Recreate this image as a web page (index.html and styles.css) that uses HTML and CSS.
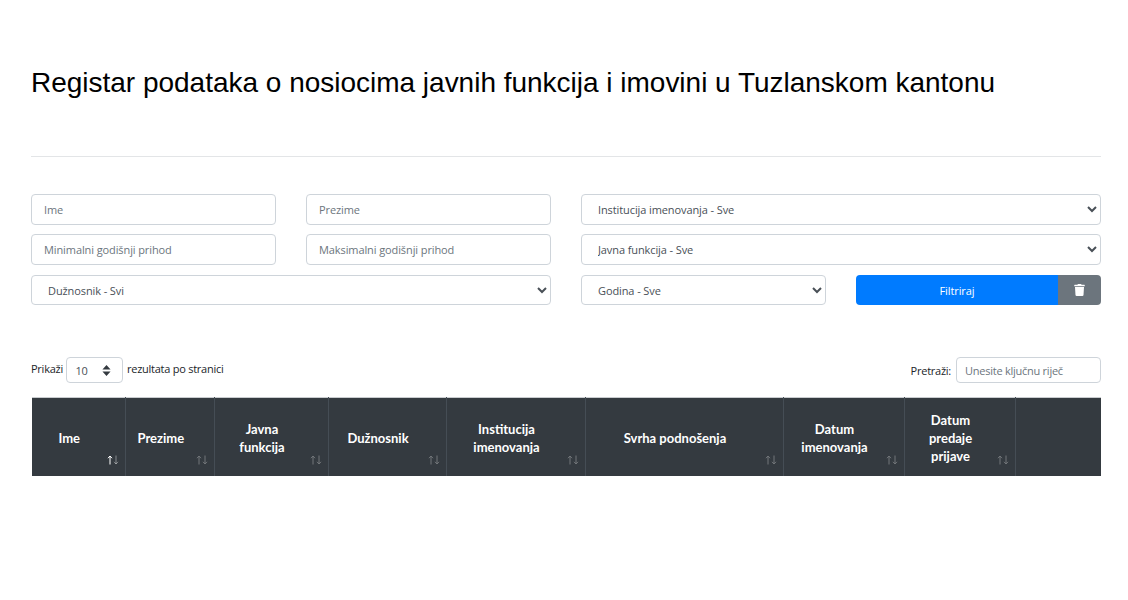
FILE: index.html
```html
<!DOCTYPE html>
<html lang="bs">
<head>
<meta charset="utf-8">
<title>Registar</title>
<link rel="stylesheet" href="styles.css">
</head>
<body>
<main class="page">
  <h1 class="title">Registar podataka o nosiocima javnih funkcija i imovini u Tuzlanskom kantonu</h1>
  <hr class="rule">
  <form class="filters">
    <input class="field" placeholder="Ime">
    <input class="field" placeholder="Prezime">
    <select class="field select span-2"><option>Institucija imenovanja - Sve</option></select>
    <input class="field" placeholder="Minimalni godišnji prihod">
    <input class="field" placeholder="Maksimalni godišnji prihod">
    <select class="field select span-2"><option>Javna funkcija - Sve</option></select>
    <select class="field select span-2 last-row"><option>Dužnosnik - Svi</option></select>
    <select class="field select last-row"><option>Godina - Sve</option></select>
    <div class="actions last-row">
      <button type="button" class="btn btn-primary">Filtriraj</button>
      <button type="button" class="btn btn-secondary" aria-label="Obriši">
        <svg class="trash" viewBox="0 0 448 512" aria-hidden="true"><path fill="currentColor" d="M432 32H312l-9.400-18.700A24 24 0 0 0 281.100 0H166.800a23.700 23.700 0 0 0-21.400 13.300L136 32H16A16 16 0 0 0 0 48v32a16 16 0 0 0 16 16h416a16 16 0 0 0 16-16V48a16 16 0 0 0-16-16zM53.200 467a48 48 0 0 0 47.900 45h245.800a48 48 0 0 0 47.900-45L416 128H32z"/></svg>
      </button>
    </div>
  </form>
  <div class="controls">
    <label class="length"><span class="length-text">Prikaži</span>
      <span class="length-wrap">
        <select class="length-select"><option>10</option></select>
        <svg class="updown" viewBox="0 0 10 12" aria-hidden="true"><path d="M5 0 9.500 4.800H.5zM5 12 .5 7.200h9z"/></svg>
      </span>
      <span class="length-text">rezultata po stranici</span></label>
    <label class="search">Pretraži:
      <input class="search-input" placeholder="Unesite ključnu riječ">
    </label>
  </div>
  <table class="table">
    <colgroup>
      <col class="c1"><col class="c2"><col class="c3"><col class="c4"><col class="c5"><col class="c6"><col class="c7"><col class="c8"><col class="c9">
    </colgroup>
    <thead>
      <tr>
        <th><span class="th-text">Ime</span><svg class="sort active" viewBox="0 0 12 10" aria-hidden="true"><path class="up" d="M3 9.500V1M1 3.200 3 1l2 2.200"/><path class="down" d="M9 .5V9M7 6.800 9 9l2-2.200"/></svg></th>
        <th><span class="th-text">Prezime</span><svg class="sort" viewBox="0 0 12 10" aria-hidden="true"><path class="up" d="M3 9.500V1M1 3.200 3 1l2 2.200"/><path class="down" d="M9 .5V9M7 6.800 9 9l2-2.200"/></svg></th>
        <th><span class="th-text">Javna<br>funkcija</span><svg class="sort" viewBox="0 0 12 10" aria-hidden="true"><path class="up" d="M3 9.500V1M1 3.200 3 1l2 2.200"/><path class="down" d="M9 .5V9M7 6.800 9 9l2-2.200"/></svg></th>
        <th><span class="th-text">Dužnosnik</span><svg class="sort" viewBox="0 0 12 10" aria-hidden="true"><path class="up" d="M3 9.500V1M1 3.200 3 1l2 2.200"/><path class="down" d="M9 .5V9M7 6.800 9 9l2-2.200"/></svg></th>
        <th><span class="th-text">Institucija<br>imenovanja</span><svg class="sort" viewBox="0 0 12 10" aria-hidden="true"><path class="up" d="M3 9.500V1M1 3.200 3 1l2 2.200"/><path class="down" d="M9 .5V9M7 6.800 9 9l2-2.200"/></svg></th>
        <th><span class="th-text">Svrha podnošenja</span><svg class="sort" viewBox="0 0 12 10" aria-hidden="true"><path class="up" d="M3 9.500V1M1 3.200 3 1l2 2.200"/><path class="down" d="M9 .5V9M7 6.800 9 9l2-2.200"/></svg></th>
        <th><span class="th-text">Datum<br>imenovanja</span><svg class="sort" viewBox="0 0 12 10" aria-hidden="true"><path class="up" d="M3 9.500V1M1 3.200 3 1l2 2.200"/><path class="down" d="M9 .5V9M7 6.800 9 9l2-2.200"/></svg></th>
        <th><span class="th-text">Datum<br>predaje<br>prijave</span><svg class="sort" viewBox="0 0 12 10" aria-hidden="true"><path class="up" d="M3 9.500V1M1 3.200 3 1l2 2.200"/><path class="down" d="M9 .5V9M7 6.800 9 9l2-2.200"/></svg></th>
        <th></th>
      </tr>
    </thead>
  </table>
</main>
</body>
</html>
```
FILE: styles.css
```css
* { box-sizing: border-box; }
html, body { margin: 0; background: #fff; }
body {
  font-family: "Open Sans", "Noto Sans", sans-serif;
  font-size: 11px;
  letter-spacing: -.1px;
  color: #212529;
  height: 600px;
  overflow: hidden;
}
.page { padding: 0 27px 0 31px; }
.title {
  margin: 0;
  padding-top: 66px;
  font-family: "Liberation Sans", Arial, sans-serif;
  font-weight: 400;
  font-size: 28px;
  line-height: 34px;
  color: #000;
  letter-spacing: -.012px;
}
.rule {
  margin: 56px 0 0;
  border: 0;
  border-top: 1px solid #e3e5e7;
}
.filters {
  margin-top: 37px;
  display: grid;
  grid-template-columns: repeat(4, 245px);
  column-gap: 30px;
  grid-template-rows: 31px 31px 31px;
  row-gap: 9px;
}
.span-2 { grid-column: span 2; }
.field {
  width: 100%;
  height: 100%;
  border: 1px solid #ced4da;
  border-radius: 4px;
  background: #fff;
  padding: 0 12px;
  font: inherit;
  letter-spacing: inherit;
  color: #495057;
  outline: 0;
}
.last-row { margin-top: 1px; height: 30px; }
.field::placeholder, .search-input::placeholder { color: #6c757d; opacity: 1; }
.actions { display: flex; }
.btn {
  border: 0;
  color: #fff;
  font: inherit;
  letter-spacing: inherit;
  height: 30px;
  padding: 0;
}
.btn-primary { flex: 1; background: #007bff; border-radius: 4px 0 0 4px; }
.btn-secondary {
  width: 43px;
  background: #6c757d;
  border-radius: 0 4px 4px 0;
  display: flex;
  align-items: center;
  justify-content: center;
}
.trash { width: 11px; height: 12px; display: block; }
.controls {
  margin-top: 52px;
  display: flex;
  justify-content: space-between;
  align-items: flex-start;
  letter-spacing: -.25px;
}
.length { display: flex; align-items: center; gap: 3.500px; white-space: nowrap; height: 26px; }
.length-text { padding-bottom: 3px; }
.length-wrap { position: relative; display: block; width: 57px; height: 26px; }
.length-select {
  appearance: none;
  display: block;
  width: 57px;
  height: 26px;
  border: 1px solid #ced4da;
  border-radius: 4px;
  background: #fff;
  font: inherit;
  letter-spacing: inherit;
  color: #495057;
  padding-left: 8px;
}
.updown {
  position: absolute;
  right: 12px;
  top: 8px;
  width: 9px;
  height: 11px;
  fill: #343a40;
  pointer-events: none;
}
.search { display: flex; align-items: center; gap: 5px; height: 26px; }
.search-input {
  width: 145px;
  height: 26px;
  border: 1px solid #ced4da;
  border-radius: 4px;
  padding: 0 8px;
  font: inherit;
  letter-spacing: inherit;
  color: #495057;
}
.table {
  margin-top: 14px;
  margin-left: 1px;
  width: 1069px;
  table-layout: fixed;
  border-collapse: collapse;
  background: #343a40;
  color: #fff;
}
.c1 { width: 93px; } .c2 { width: 89px; } .c3 { width: 114px; }
.c4 { width: 118px; } .c5 { width: 139px; } .c6 { width: 198px; }
.c7 { width: 121px; } .c8 { width: 111px; } .c9 { width: 86px; }
th {
  position: relative;
  height: 78px;
  padding: 0 30px 0 12px;
  border-top: 1px solid #c9cccf;
  border-right: 1px solid #454d55;
  text-align: center;
  vertical-align: middle;
  font-family: Lato, "Open Sans", sans-serif;
  letter-spacing: 0;
  font-size: 13px;
  line-height: 18px;
  font-weight: 700;
}
th:first-child { box-shadow: -1px 0 0 #eef0f1; }
.th-text { position: relative; top: 1px; }
th:last-child { border-right: 0; }
.sort {
  position: absolute;
  right: 6px;
  bottom: 11px;
  width: 12px;
  height: 10px;
  fill: none;
  stroke: #fff;
  stroke-width: 1;
  opacity: .3;
}
.sort.active { opacity: 1; }
.sort.active .down { opacity: .4; }
```
